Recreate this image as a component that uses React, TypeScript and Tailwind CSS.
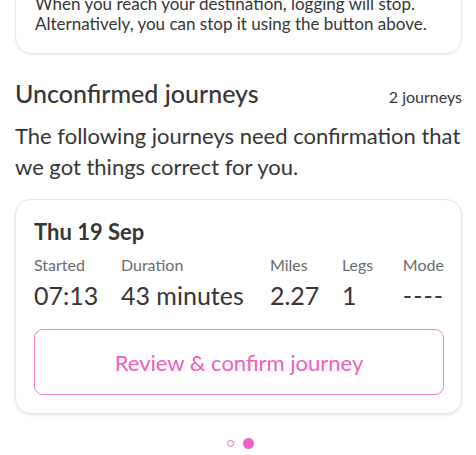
import React from 'react';

const stats = [
  { label: 'Started', value: '07:13', w: 'w-[87px]' },
  { label: 'Duration', value: '43 minutes', w: 'w-[149px]' },
  { label: 'Miles', value: '2.27', w: 'w-[72px]' },
  { label: 'Legs', value: '1', w: 'w-[61px]' },
];

const App: React.FC = () => {
  return (
    <div className="w-[476px] h-[455px] overflow-hidden bg-white text-[#363636]" style={{ fontFamily: 'Lato, "Noto Sans", sans-serif' }}>
      <div className="pl-[15px] pr-[14px] mt-[-26px]">
        {/* Tracking hint card */}
        <div className="rounded-[16px] border border-[#e6e6e6] shadow-[0_1px_2px_rgba(0,0,0,0.08)] px-[19px] pt-[19px] pb-[19px]">
          <p className="text-[17px] leading-[20px]">
            When you reach your destination, logging will stop.
            <br />
            Alternatively, you can stop it using the button above.
          </p>
        </div>

        <div className="mt-[25px] flex items-baseline justify-between">
          <h2 className="text-[25px] leading-[28px] font-medium">Unconfirmed journeys</h2>
          <span className="text-[16px]">2 journeys</span>
        </div>

        <p className="mt-[11px] text-[22px] leading-[31px]">
          The following journeys need confirmation that we got things correct for you.
        </p>

        {/* Journey card */}
        <div className="mt-[17px] rounded-[16px] border border-[#e6e6e6] shadow-[0_1px_3px_rgba(0,0,0,0.12)] pl-[18px] pr-[17px] pt-[19px] pb-[18px]">
          <h3 className="text-[22px] leading-[26px] font-bold">Thu 19 Sep</h3>
          <div className="mt-[9px] flex">
            {stats.map((s) => (
              <div key={s.label} className={s.w}>
                <div className="text-[16px] leading-[22px] text-[#6b6b6b]">{s.label}</div>
                <div className="mt-[4px] text-[25px] leading-[30px] whitespace-nowrap">{s.value}</div>
              </div>
            ))}
            <div className="flex-1">
              <div className="text-[16px] leading-[22px] text-[#6b6b6b]">Mode</div>
              <div className="mt-[4px] text-[25px] leading-[30px] tracking-[1px] whitespace-nowrap">----</div>
            </div>
          </div>
          <button className="mt-[19px] w-full h-[66px] rounded-[9px] border-[1.5px] border-[#f57fcf] text-[#ef5ec0] text-[22px]">
            Review &amp; confirm journey
          </button>
        </div>

        {/* Pager dots */}
        <div className="mt-[24px] flex items-center justify-center gap-[9px] pl-[3px]">
          <span className="w-[7px] h-[7px] rounded-full border-[1.5px] border-[#f060c2]" />
          <span className="w-[11px] h-[11px] rounded-full bg-[#f060c2]" />
        </div>
      </div>
    </div>
  );
};

export default App;
